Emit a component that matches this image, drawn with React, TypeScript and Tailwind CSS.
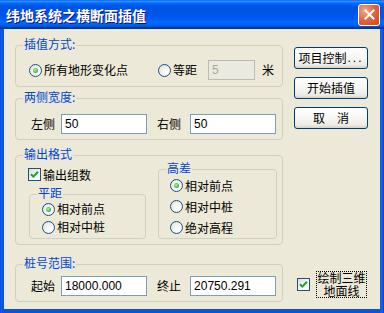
import React from "react";

const FONT = "font-['Noto_Sans_CJK_SC','Liberation_Sans',sans-serif]";

function Radio({ checked, label }: { checked?: boolean; label: string }) {
  return (
    <div className="flex items-center gap-[2px]">
      <span className="relative w-[13px] h-[13px] rounded-full border border-[#1C5180] bg-[radial-gradient(circle_at_65%_65%,#FFFFFF_0%,#F4F4F0_40%,#DCDCD7_100%)] flex items-center justify-center shrink-0">
        {checked && (
          <span className="w-[5px] h-[5px] rounded-full bg-[radial-gradient(circle_at_40%_40%,#B7F1B7_0%,#55C455_50%,#21A121_100%)]" />
        )}
      </span>
      <span className="leading-[14px] text-[12px] text-black">{label}</span>
    </div>
  );
}

function Check({ checked }: { checked?: boolean }) {
  return (
    <span className="w-[13px] h-[13px] border border-[#1C5180] bg-[linear-gradient(135deg,#DCDCD7_0%,#F8F8F6_60%,#FFFFFF_100%)] flex items-center justify-center shrink-0">
      {checked && (
        <svg width="9" height="9" viewBox="0 0 9 9">
          <path d="M1 4.2 L3.4 6.6 L8 1.8" stroke="#21A121" strokeWidth="2" fill="none" />
        </svg>
      )}
    </span>
  );
}

function Group({
  label,
  className,
  children,
}: {
  label: string;
  className: string;
  children?: React.ReactNode;
}) {
  return (
    <div className={`relative border border-[#D0D0BF] rounded-[4px] box-border ${className}`}>
      <span className="absolute left-[7px] top-[-9px] px-[1px] bg-[#ECE9D8] leading-[14px] text-[12px] text-[#0046D5] whitespace-nowrap">
        {label}
      </span>
      {children}
    </div>
  );
}

function Input({ value, w, disabled }: { value: string; w: string; disabled?: boolean }) {
  return (
    <div
      className={`${w} h-[20px] border flex items-center pl-[3px] font-['Liberation_Sans',sans-serif] text-[12px] ${
        disabled
          ? "border-[#BDBBAE] bg-[#EBEAE0] text-[#ACA899]"
          : "border-[#7F9DB9] bg-white text-black"
      }`}
    >
      {value}
    </div>
  );
}

function Button({ children }: { children: React.ReactNode }) {
  return (
    <div className="w-[74px] h-[22px] border border-[#003C74] rounded-[3px] bg-[linear-gradient(to_bottom,#FFFFFF_0%,#F6F6F3_50%,#ECEBE6_85%,#D6D0C5_100%)] flex items-center justify-center text-[12px] text-black leading-[14px]">
      {children}
    </div>
  );
}

export default function App() {
  return (
    <div className={`w-[384px] h-[313px] flex flex-col overflow-hidden ${FONT}`}>
      {/* Title bar */}
      <div className="h-[29px] shrink-0 flex items-center justify-between pl-[6px] pr-[4px] bg-[linear-gradient(to_bottom,#0058EE_0%,#3593FF_4%,#288EFF_6%,#127DFF_8%,#036FFC_10%,#0262EE_14%,#0057E5_20%,#0054E3_24%,#0055EB_56%,#005BF5_66%,#026AFE_76%,#0062EF_86%,#0052D6_92%,#0040AB_94%,#003092_100%)]">
        <span className="text-white font-bold text-[14px] leading-[16px] [text-shadow:1px_1px_#0F1089]">
          纬地系统之横断面插值
        </span>
        <div className="w-[22px] h-[22px] rounded-[3px] border border-white bg-[radial-gradient(circle_at_30%_30%,#F3A98E_0%,#E5683F_45%,#CC4418_100%)] flex items-center justify-center">
          <svg width="11" height="11" viewBox="0 0 11 11">
            <path d="M1.5 1.5 L9.5 9.5 M9.5 1.5 L1.5 9.5" stroke="white" strokeWidth="2" strokeLinecap="square" />
          </svg>
        </div>
      </div>

      {/* Frame */}
      <div className="flex-1 flex px-[4px] pb-[4px] bg-[linear-gradient(to_right,#0831D9_0px,#166AEE_1px,#0855DD_2px,#0855DD_3px,#0855DD_380px,#166AEE_382px,#0831D9_384px)]">
        <div className="flex-1 bg-[#ECE9D8] flex pl-[11px]">
          {/* Left column */}
          <div className="w-[268px] flex flex-col">
            {/* 插值方式 */}
            <Group label="插值方式:" className="mt-[16px] h-[42px] pt-[14px] pl-[13px]">
              <div className="flex items-center h-[20px]">
                <Radio checked label="所有地形变化点" />
                <div className="ml-[30px]">
                  <Radio label="等距" />
                </div>
                <div className="ml-[11px]">
                  <Input value="5" w="w-[47px]" disabled />
                </div>
                <span className="ml-[7px] text-[12px] leading-[14px] text-black">米</span>
              </div>
            </Group>

            {/* 两侧宽度 */}
            <Group label="两侧宽度:" className="mt-[11px] h-[42px] pt-[15px] pl-[15px]">
              <div className="flex items-center h-[20px] text-[12px] text-black">
                <span className="leading-[14px]">左侧</span>
                <div className="ml-[6px]">
                  <Input value="50" w="w-[86px]" />
                </div>
                <span className="ml-[10px] leading-[14px]">右侧</span>
                <div className="ml-[9px]">
                  <Input value="50" w="w-[86px]" />
                </div>
              </div>
            </Group>

            {/* 输出格式 */}
            <Group label="输出格式" className="mt-[15px] h-[90px] pt-[12px] pl-[12px]">
              <div className="flex">
                <div className="w-[118px] flex flex-col">
                  <div className="flex items-center gap-[2px] h-[13px]">
                    <Check checked />
                    <span className="text-[12px] leading-[14px] text-black">输出组数</span>
                  </div>
                  <Group label="平距" className="ml-[1px] mt-[13px] w-[117px] h-[45px] pt-[5px] pl-[12px]">
                    <div className="h-[18px] flex items-center">
                      <Radio checked label="相对前点" />
                    </div>
                    <div className="h-[18px] flex items-center">
                      <Radio label="相对中桩" />
                    </div>
                  </Group>
                </div>
                <Group label="高差" className="ml-[12px] mt-[1px] w-[119px] h-[70px] pt-[5px] pl-[11px]">
                  <div className="h-[21px] flex items-center">
                    <Radio checked label="相对前点" />
                  </div>
                  <div className="h-[21px] flex items-center">
                    <Radio label="相对中桩" />
                  </div>
                  <div className="h-[21px] flex items-center">
                    <Radio label="绝对高程" />
                  </div>
                </Group>
              </div>
            </Group>

            {/* 桩号范围 */}
            <Group label="桩号范围:" className="mt-[19px] h-[38px] pt-[11px] pl-[15px]">
              <div className="flex items-center h-[20px] text-[12px] text-black">
                <span className="leading-[14px]">起始</span>
                <div className="ml-[6px]">
                  <Input value="18000.000" w="w-[86px]" />
                </div>
                <span className="ml-[10px] leading-[14px]">终止</span>
                <div className="ml-[9px]">
                  <Input value="20750.291" w="w-[86px]" />
                </div>
              </div>
            </Group>
          </div>

          {/* Right column */}
          <div className="ml-[11px] w-[74px] flex flex-col pt-[18px] pb-[11px]">
            <div className="flex flex-col gap-[8px]">
              <Button>
                <span>项目控制</span>
                <span className="font-['Liberation_Sans',sans-serif] tracking-[2px] ml-[1px]">...</span>
              </Button>
              <Button>开始插值</Button>
              <Button>
                <span className="flex gap-[12px]">
                  <span>取</span>
                  <span>消</span>
                </span>
              </Button>
            </div>
            <div className="mt-auto flex items-center pl-[3px]">
              <Check checked />
              <div className="ml-[6px] w-[51px] h-[27px] border border-dotted border-black flex flex-col items-center justify-center text-[12px] leading-[12.5px] text-black">
                <span>绘制三维</span>
                <span>地面线</span>
              </div>
            </div>
          </div>
        </div>
      </div>
    </div>
  );
}
